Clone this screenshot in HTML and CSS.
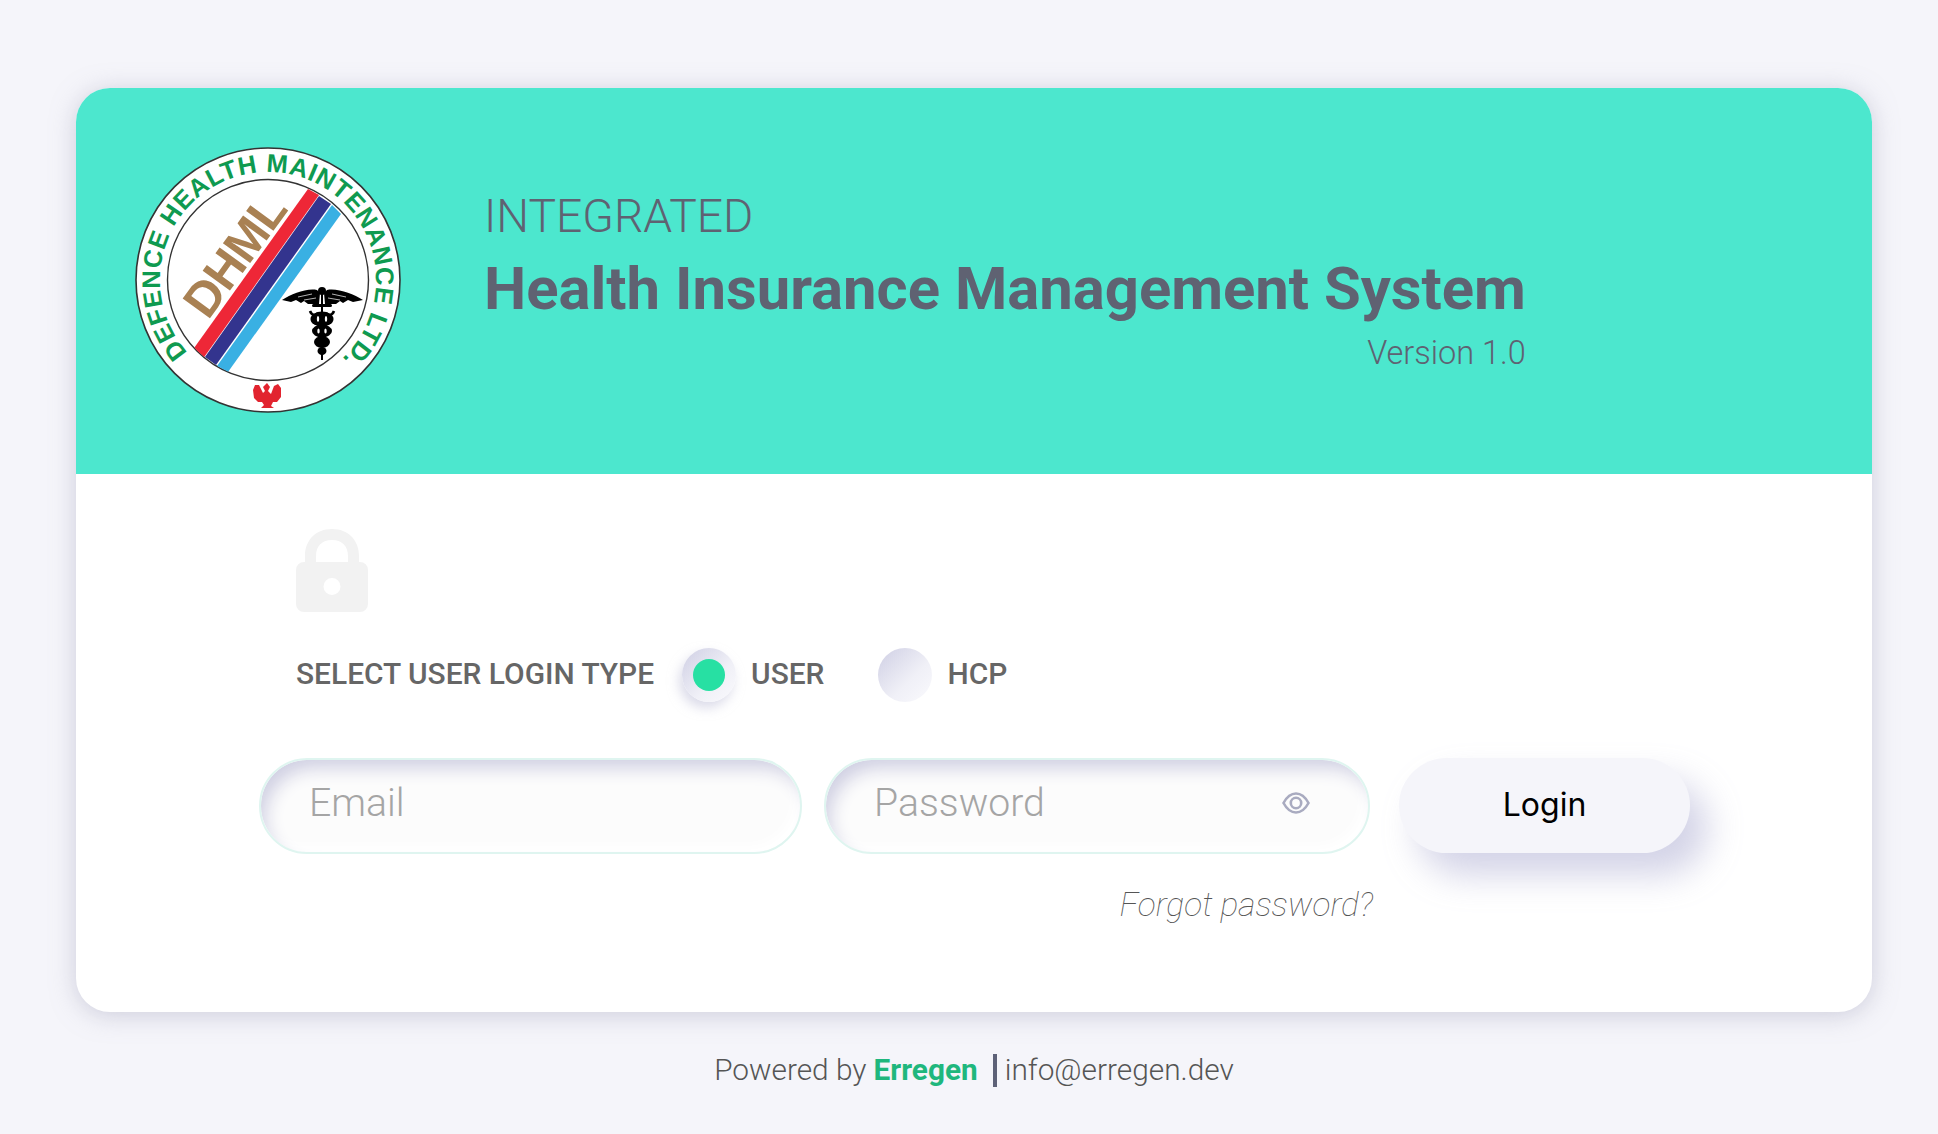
FILE: index.html
```html
<!DOCTYPE html>
<html lang="en">
<head>
<meta charset="utf-8">
<title>Health Insurance Management System</title>
<link rel="stylesheet" href="styles.css">
</head>
<body>
<main class="page">
  <section class="card">
    <header class="banner">
      <svg class="logo" viewBox="133 145 270 270" aria-label="DHML logo">
        <defs>
          <clipPath id="inner"><circle cx="268" cy="280" r="100"/></clipPath>
          <path id="ring" d="M187.7 352.3 A108 108 0 1 1 334.4 365.2"/>
        </defs>
        <circle cx="268" cy="280" r="132" fill="#fff" stroke="#333" stroke-width="1.6"/>
        <circle cx="268" cy="280" r="100.5" fill="#fff" stroke="#333" stroke-width="1.4"/>
        <text class="logo-ring" textLength="506" lengthAdjust="spacing"><textPath href="#ring">DEFENCE HEALTH MAINTENANCE LTD.</textPath></text>
        <g clip-path="url(#inner)">
          <polygon points="322,169 333,175 204,357 193,349" fill="#ee2737" transform="translate(-14,20)"/>
          <polygon points="319,196 331,204 216,365 205,357" fill="#33348e"/>
          <polygon points="332,205 341,214 228,372 217,366" fill="#39b0e3"/>
        </g>
        <text class="logo-mark" x="208" y="321" transform="rotate(-54 208 321)" textLength="138">DHML</text>
        <g class="caduceus">
          <path d="M282 300 C292 294 306 288 317 290 L320 293 L319 304 L308 304 L304 301 L301 303 L296 300 L291 302Z"/>
          <path d="M363 300 C353 294 338 288 327 290 L324 293 L325 304 L336 304 L340 301 L343 303 L348 300 L353 302Z"/>
          <path class="feather" d="M298 297 L312 294 M304 300 L316 298 M346 297 L332 294 M340 300 L328 298"/>
          <circle cx="322" cy="291" r="4"/>
          <rect x="321" y="292" width="2" height="68"/>
          <rect x="312" y="304" width="20" height="3" rx="1.5"/>
          <ellipse cx="322" cy="319" rx="11.5" ry="7.5"/>
          <ellipse cx="322" cy="331" rx="10" ry="6.5"/>
          <ellipse cx="322" cy="342" rx="8" ry="6"/>
          <ellipse cx="322" cy="351" rx="4.5" ry="4"/>
          <path d="M310 311 C312 316 316 316 318 313 M334 311 C332 316 328 316 326 313" class="snake"/>
          <ellipse class="gap" cx="318" cy="319" rx="1.2" ry="3"/>
          <ellipse class="gap" cx="326" cy="319" rx="1.2" ry="3"/>
          <ellipse class="gap" cx="318.5" cy="331" rx="1.2" ry="2.6"/>
          <ellipse class="gap" cx="325.5" cy="331" rx="1.2" ry="2.6"/>
        </g>
        <path d="M267 383 L270 387 L268 391 L271 394 L274 386 L278 384 L281 388 L281 397 L277 402 L273 402 L271 406 L274 408 L261 408 L264 405 L262 402 L258 402 L254 398 L253 390 L255 385 L259 385 L263 393 L265 391 L263 387Z" fill="#e2242f"/>
      </svg>
      <div class="titles">
        <p class="eyebrow">INTEGRATED</p>
        <h1 class="headline">Health Insurance Management System</h1>
        <p class="version">Version 1.0</p>
      </div>
    </header>
    <div class="content">
      <svg class="lock" viewBox="0 0 72 83">
        <path d="M9 36 V27 C9 11 20 0 36 0 C52 0 63 11 63 27 V36 H52 V27 C52 17 46 11 36 11 C26 11 20 17 20 27 V36Z" fill="#f2f2f2"/>
        <path fill-rule="evenodd" d="M8 33 H64 A8 8 0 0 1 72 41 V75 A8 8 0 0 1 64 83 H8 A8 8 0 0 1 0 75 V41 A8 8 0 0 1 8 33Z M36 49 A8.5 8.5 0 1 0 36 66 A8.5 8.5 0 1 0 36 49Z" fill="#f2f2f2"/>
      </svg>
      <div class="login-type">
        <span class="type-label">SELECT USER LOGIN TYPE</span>
        <span class="radio radio-on"><span class="radio-dot"></span></span>
        <span class="option">USER</span>
        <span class="radio radio-off"></span>
        <span class="option">HCP</span>
      </div>
      <form class="login-form">
        <label class="field"><input class="field-input" type="text" placeholder="Email"></label>
        <label class="field">
          <input class="field-input" type="password" placeholder="Password">
          <svg class="eye" viewBox="0 0 28 22"><path d="M1.5 11 C5 4.5 9 1.5 14 1.5 C19 1.5 23 4.5 26.5 11 C23 17.5 19 20.5 14 20.5 C9 20.5 5 17.5 1.5 11Z"/><circle cx="14" cy="11" r="5.2"/></svg>
        </label>
        <button class="login-btn" type="button">Login</button>
        <a class="forgot">Forgot password?</a>
      </form>
    </div>
  </section>
  <footer class="footer">
    <span>Powered by</span>
    <b class="brand">Erregen</b>
    <span class="divider"></span>
    <span>info@erregen.dev</span>
  </footer>
</main>
</body>
</html>
```
FILE: styles.css
```css
* { box-sizing: border-box; }
html, body { margin: 0; height: 100%; }
body {
  background: #f5f5fa;
  font-family: Roboto, "Liberation Sans", sans-serif;
  overflow: hidden;
}
.page { padding: 88px 66px 0 76px; }
.card {
  height: 924px;
  border-radius: 34px;
  background: #fff;
  box-shadow: 0 3px 24px rgba(165, 165, 190, 0.5);
  overflow: hidden;
}
.banner {
  height: 386px;
  background: #4ce7ce;
  display: flex;
  align-items: center;
  padding: 0 0 2px 57px;
  gap: 81px;
}
.logo { width: 270px; height: 270px; flex: none; }
.logo-ring { font: 700 25.5px "Liberation Sans", sans-serif; fill: #0f9a50; }
.logo-mark { font: 700 49px "Liberation Sans", sans-serif; fill: #a98153; }
.caduceus { fill: #000; }
.caduceus .gap { fill: #fff; }
.feather { fill: none; stroke: #fff; stroke-width: 0.7; }
.snake { fill: none; stroke: #000; stroke-width: 2.6; }
.titles {
  display: flex;
  flex-direction: column;
  align-self: flex-start;
  color: #5f6272;
  padding-top: 102px;
}
.eyebrow { margin: 0; font-size: 46.2px; font-weight: 300; line-height: 52px; }
.headline { margin: 13px 0 0; font-size: 59.8px; font-weight: 700; line-height: 68px; white-space: nowrap; }
.version { margin: 10px 0 0; font-size: 32.5px; font-weight: 300; line-height: 40px; text-align: right; }
.content { padding-top: 55px; }
.lock { display: block; width: 72px; height: 83px; margin-left: 220px; }
.login-type {
  display: flex;
  align-items: center;
  height: 54px;
  margin: 36px 0 0 220px;
  color: #666;
  font-size: 29.9px;
  font-weight: 500;
  line-height: 52px;
}
.type-label { margin-right: 28px; margin-bottom: 2px; }
.radio {
  width: 54px;
  height: 54px;
  border-radius: 50%;
  display: flex;
  align-items: center;
  justify-content: center;
  background: linear-gradient(135deg, #cfcfe4 0%, #f0f0f7 60%, #fafafd 100%);
}
.radio-on { box-shadow: -3px 6px 12px rgba(190, 190, 215, 0.55); }
.radio-dot { width: 32px; height: 32px; border-radius: 50%; background: #27e0a3; }
.option { margin: 0 54px 2px 15px; }
.login-form {
  display: grid;
  grid-template-columns: 543px 546px 291px;
  column-gap: 22px;
  margin: 56px 0 0 183px;
}
.field {
  height: 96px;
  display: flex;
  align-items: center;
  padding: 0 58px 6px 48px;
  border: 2px solid #dff5f0;
  border-radius: 48px;
  background: #fcfcfc;
  box-shadow: inset 8px 12px 18px -4px #cfcfe2, inset -6px -6px 12px #fff;
}
.field-input {
  flex: 1;
  min-width: 0;
  border: 0;
  outline: 0;
  padding: 0;
  background: transparent;
  font: 300 39.2px Roboto, sans-serif;
  color: #555;
}
.field-input::placeholder { color: #a5a5a5; opacity: 1; }
.eye { width: 28px; height: 22px; flex: none; fill: none; stroke: #a9abc0; stroke-width: 2.6; }
.login-btn {
  margin-left: 7px;
  height: 95px;
  width: 291px;
  border: 0;
  border-radius: 48px;
  background: #f5f5fa;
  padding: 0 0 2px;
  font: 400 32px Inter, Lato, sans-serif;
  color: #000;
  box-shadow: 18px 22px 34px rgba(200, 200, 225, 0.8), -8px -8px 18px rgba(255, 255, 255, 0.9);
}
.forgot {
  grid-column: 1 / 3;
  margin: 32px -3px 0 0;
  text-align: right;
  font-size: 33.6px;
  font-weight: 100;
  font-style: italic;
  line-height: 38px;
  color: #555;
}
.footer {
  display: flex;
  justify-content: center;
  align-items: center;
  gap: 7px;
  margin-top: 40px;
  font-size: 29.8px;
  font-weight: 300;
  line-height: 36px;
  color: #555;
}
.brand { font-weight: 700; color: #1fb77d; }
.divider { width: 4px; height: 33px; margin: 0 1px 0 8px; background: #5e6278; }
```
